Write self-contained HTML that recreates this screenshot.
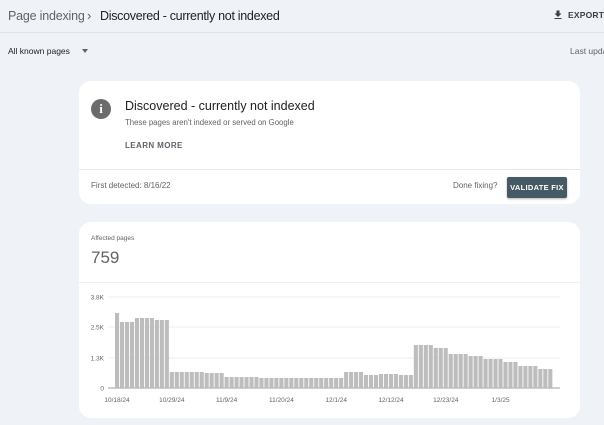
<!DOCTYPE html>
<html><head><meta charset="utf-8"><style>
*{margin:0;padding:0;box-sizing:border-box}
body{width:604px;height:425px;overflow:hidden;background:#eff3f8;font-family:"Liberation Sans",Arial,sans-serif;position:relative;color:#202124}
.a{position:absolute;white-space:nowrap}
.card{position:absolute;background:#fff;border-radius:12px}
</style></head><body>
<div class="a" style="left:8px;top:9px;font-size:12.5px;color:#5f6368;letter-spacing:-.2px">Page indexing</div>
<div class="a" style="left:87px;top:8px;font-size:13px;color:#5f6368">›</div>
<div class="a" style="left:100px;top:9px;font-size:12.5px;color:#202124;letter-spacing:-.3px">Discovered - currently not indexed</div>
<svg class="a" style="left:552px;top:9px" width="12" height="12" viewBox="0 0 24 24"><path d="M19 9h-4V3H9v6H5l7 7 7-7zM5 18v2h14v-2H5z" fill="#3c4043"/></svg>
<div class="a" style="left:568px;top:10px;font-size:8.5px;font-weight:bold;color:#3c4043;letter-spacing:.2px">EXPORT</div>
<div class="a" style="left:0;top:32px;width:604px;height:1px;background:#dfe3e8"></div>
<div class="a" style="left:8px;top:46px;font-size:8.5px;color:#202124">All known pages</div>
<div class="a" style="left:82px;top:46px;width:0;height:0;border-left:3px solid transparent;border-right:3px solid transparent;border-top:4px solid #5f6368;margin-top:3px"></div>
<div class="a" style="left:570px;top:46px;font-size:8.5px;color:#5f6368">Last updated</div>

<div class="card" style="left:79px;top:81px;width:501px;height:123px">
 <div class="a" style="left:12px;top:18px;width:20px;height:20px;border-radius:50%;background:#6b6b6b;color:#fff;font-weight:bold;font-size:13px;text-align:center;line-height:20px;font-family:'Liberation Serif',serif">i</div>
 <div class="a" style="left:46px;top:18px;font-size:12.5px;color:#202124">Discovered - currently not indexed</div>
 <div class="a" style="left:46px;top:37px;font-size:7.8px;color:#5f6368">These pages aren't indexed or served on Google</div>
 <div class="a" style="left:46px;top:60px;font-size:8px;font-weight:bold;color:#5f6368;letter-spacing:.4px">LEARN MORE</div>
 <div class="a" style="left:0;top:88px;width:501px;height:1px;background:#e4e6e9"></div>
 <div class="a" style="left:12px;top:100px;font-size:8px;color:#5f6368">First detected: 8/16/22</div>
 <div class="a" style="left:374px;top:100px;font-size:8px;color:#5f6368">Done fixing?</div>
 <div class="a" style="left:428px;top:96px;width:60px;height:21px;background:#455a64;border-radius:2px;color:#fff;font-size:7.5px;font-weight:bold;text-align:center;line-height:21px;letter-spacing:.3px;box-shadow:0 1px 2px rgba(0,0,0,.3)">VALIDATE FIX</div>
</div>

<div class="card" style="left:79px;top:222px;width:501px;height:196px">
 <div class="a" style="left:12px;top:13px;font-size:6.5px;color:#5f6368">Affected pages</div>
 <div class="a" style="left:12px;top:26px;font-size:17px;color:#5f6368">759</div>
 <div class="a" style="left:0;top:60px;width:501px;height:1px;background:#eceef0"></div>
</div>
<svg class="a" style="left:0;top:0" width="604" height="425" id="ch"></svg>
<script>
var s='',g=[[1,75],[3,66],[4,70],[3,68],[7,16],[4,15],[3,11],[4,11],[17,10],[4,16],[3,13],[4,14],[3,13],[4,43],[3,40],[4,34],[3,32],[4,29],[3,26],[4,22],[3,19]];
var x=115,B=388;
[[297,'3.8K'],[327,'2.5K'],[358,'1.3K'],[388,'0']].forEach(function(t){
s+='<line x1="108" x2="560" y1="'+t[0]+'" y2="'+t[0]+'" stroke="'+(t[1]=='0'?'#9aa0a6':'#eeeeee')+'"/>';
s+='<text x="104" y="'+(t[0]+2.5)+'" font-size="6.5" fill="#5f6368" text-anchor="end" font-family="Liberation Sans">'+t[1]+'</text>';});
g.forEach(function(p){for(var i=0;i<p[0];i++){s+='<rect x="'+x+'" y="'+(B-p[1])+'" width="4.1" height="'+p[1]+'" fill="#bdbdbd"/>';x+=4.98;}});
var L=['10/18/24','10/29/24','11/9/24','11/20/24','12/1/24','12/12/24','12/23/24','1/3/25'];
L.forEach(function(l,i){s+='<text x="'+(117+i*54.8)+'" y="402" font-size="6.5" fill="#5f6368" text-anchor="middle" font-family="Liberation Sans">'+l+'</text>';});
document.getElementById('ch').innerHTML=s;
</script>
</body></html>
